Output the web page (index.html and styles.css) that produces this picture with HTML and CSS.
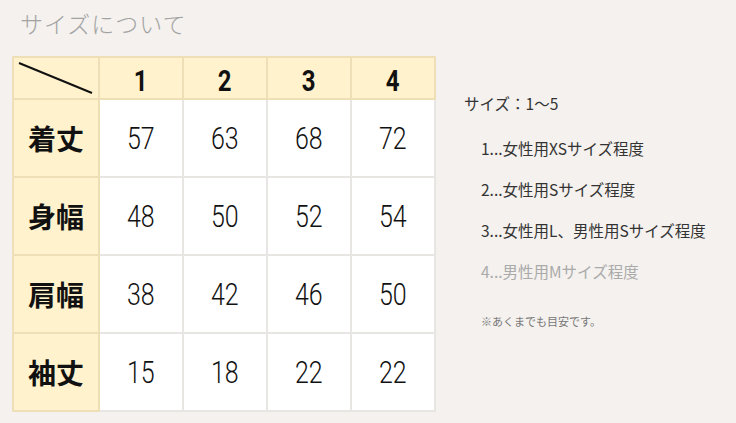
FILE: index.html
```html
<!DOCTYPE html>
<html lang="ja">
<head>
<meta charset="utf-8">
<link rel="stylesheet" href="styles.css">
</head>
<body>
<div class="page">
  <h1 class="title">サイズについて</h1>
  <div class="content">
    <table class="size-table">
      <tr class="head">
        <th class="corner"><svg class="diag" width="84" height="40" viewBox="0 0 84 40"><line x1="5" y1="5" x2="78" y2="35" stroke="#111" stroke-width="2"/></svg></th>
        <th><span class="num-b">1</span></th>
        <th><span class="num-b">2</span></th>
        <th><span class="num-b">3</span></th>
        <th><span class="num-b">4</span></th>
      </tr>
      <tr>
        <th class="label">着丈</th>
        <td><span class="num">57</span></td>
        <td><span class="num">63</span></td>
        <td><span class="num">68</span></td>
        <td><span class="num">72</span></td>
      </tr>
      <tr>
        <th class="label">身幅</th>
        <td><span class="num">48</span></td>
        <td><span class="num">50</span></td>
        <td><span class="num">52</span></td>
        <td><span class="num">54</span></td>
      </tr>
      <tr>
        <th class="label">肩幅</th>
        <td><span class="num">38</span></td>
        <td><span class="num">42</span></td>
        <td><span class="num">46</span></td>
        <td><span class="num">50</span></td>
      </tr>
      <tr>
        <th class="label">袖丈</th>
        <td><span class="num">15</span></td>
        <td><span class="num">18</span></td>
        <td><span class="num">22</span></td>
        <td><span class="num">22</span></td>
      </tr>
    </table>
    <div class="info">
      <p class="range">サイズ：1〜5</p>
      <ul class="list">
        <li>1...女性用XSサイズ程度</li>
        <li>2...女性用Sサイズ程度</li>
        <li>3...女性用L、男性用Sサイズ程度</li>
        <li class="muted">4...男性用Mサイズ程度</li>
      </ul>
      <p class="note">※あくまでも目安です。</p>
    </div>
  </div>
</div>
</body>
</html>
```
FILE: styles.css
```css
html, body {
  margin: 0;
  padding: 0;
  background: #f4f1ee;
}
body {
  font-family: "Noto Sans CJK JP", "Noto Sans", sans-serif;
  color: #222;
}
.page {
  width: 736px;
  height: 423px;
  overflow: hidden;
}
.title {
  margin: 0;
  padding: 6px 0 0 20px;
  height: 45px;
  box-sizing: border-box;
  font-size: 23px;
  font-weight: 300;
  color: #a3a3a3;
  letter-spacing: 1px;
  line-height: 34px;
}
.content {
  display: flex;
  align-items: flex-start;
  padding: 11px 0 0 12px;
}
.size-table {
  border-collapse: collapse;
  border-top: 2px solid #cfcac2;
  border-left: 2px solid #cfcac2;
  background: #fff;
}
.size-table th,
.size-table td {
  border: 2px solid #e8e6e3;
  padding: 0;
  text-align: center;
  vertical-align: middle;
  width: 82px;
}
.size-table tr.head th {
  height: 37px;
  background: #fff2cc;
  border-color: #eedfb6;
}
.diag {
  display: block;
}
.size-table td {
  height: 76px;
}
.size-table th.label {
  background: #fff2cc;
  border-color: #eedfb6;
  font-size: 28px;
  font-weight: 700;
  color: #111;
  height: 76px;
}
.num {
  display: inline-block;
  font-family: "Roboto", sans-serif;
  font-weight: 300;
  font-size: 32px;
  color: #111;
  transform: scaleX(0.78);
}
.num-b {
  display: inline-block;
  font-family: "Roboto", sans-serif;
  font-weight: 700;
  font-size: 30px;
  color: #111;
  transform: scaleX(0.8);
  position: relative;
  top: 2px;
}
.info {
  padding: 37px 0 0 28px;
  font-size: 15.5px;
  color: #333;
}
.range {
  margin: 0;
  line-height: 20px;
}
.list {
  list-style: none;
  margin: 0;
  padding: 25px 0 0 17px;
}
.list li {
  line-height: 20px;
  margin-bottom: 21px;
  white-space: nowrap;
}
.list li.muted {
  color: #aaa;
}
.note {
  margin: 32px 0 0 17px;
  font-size: 11px;
  line-height: 16px;
  color: #777;
}
```
